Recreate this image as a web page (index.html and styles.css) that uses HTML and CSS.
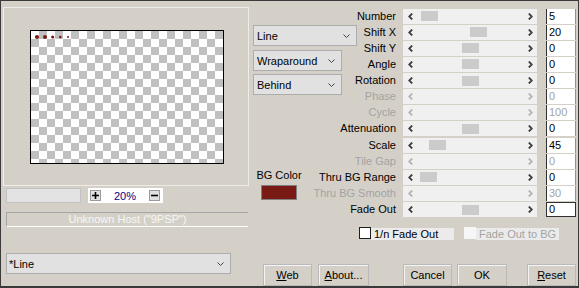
FILE: index.html
```html
<!DOCTYPE html>
<html lang="en">
<head>
  <meta charset="UTF-8">
  <title>Line Filter</title>
  <link rel="stylesheet" href="styles.css">
</head>
<body>
  <div class="window">
    <div class="left">
      <div class="preview">
        <div class="canvas">
          <svg width="192" height="132" viewBox="0 0 192 132">
            <circle cx="6" cy="6" r="2.1" fill="#7a1a15"/>
            <circle cx="14" cy="6" r="2" fill="#7a1a15"/>
            <circle cx="21.7" cy="6" r="1.6" fill="#7a1a15"/>
            <circle cx="29.3" cy="6" r="1.3" fill="#7a1a15"/>
            <circle cx="37" cy="6" r="1" fill="#7a1a15"/>
          </svg>
        </div>
      </div>
      <div class="zoom-row">
        <div class="zoom-track"></div>
        <div class="zoom-box">
          <span class="mini-btn">
            <svg width="7" height="7" viewBox="0 0 7 7"><path d="M0 3.5H7M3.5 0V7" stroke="#000" stroke-width="1.6"/></svg>
          </span>
          <span class="zoom-value">20%</span>
          <span class="mini-btn">
            <svg width="7" height="7" viewBox="0 0 7 7"><path d="M0 3.5H7" stroke="#000" stroke-width="1.6"/></svg>
          </span>
        </div>
      </div>
      <div class="host">Unknown Host ("9PSP")</div>
      <div class="select preset">
        <span>*Line</span>
        <svg class="chev" width="7" height="4" viewBox="0 0 7 4"><polyline points="0.5,0.5 3.5,3.5 6.5,0.5" fill="none" stroke="#444" stroke-width="1"/></svg>
      </div>
    </div>

    <div class="right">
      <div class="top">
        <div class="mid">
          <div class="select line">
            <span>Line</span>
            <svg class="chev" width="7" height="4" viewBox="0 0 7 4"><polyline points="0.5,0.5 3.5,3.5 6.5,0.5" fill="none" stroke="#444" stroke-width="1"/></svg>
          </div>
          <div class="select small wrap">
            <span>Wraparound</span>
            <svg class="chev" width="7" height="4" viewBox="0 0 7 4"><polyline points="0.5,0.5 3.5,3.5 6.5,0.5" fill="none" stroke="#444" stroke-width="1"/></svg>
          </div>
          <div class="select small behind">
            <span>Behind</span>
            <svg class="chev" width="7" height="4" viewBox="0 0 7 4"><polyline points="0.5,0.5 3.5,3.5 6.5,0.5" fill="none" stroke="#444" stroke-width="1"/></svg>
          </div>
          <div class="bg-color">
            <span>BG Color</span>
            <div class="swatch"></div>
          </div>
        </div>

        <div class="params" id="params"></div>
      </div>

      <div class="checks">
        <div class="check">
          <span class="box"></span>
          <span class="check-label">1/n Fade Out</span>
        </div>
        <div class="check disabled">
          <span class="box"></span>
          <span class="check-label">Fade Out to BG</span>
        </div>
      </div>

      <div class="buttons">
        <div class="btn web"><u>W</u>eb</div>
        <div class="btn about"><u>A</u>bout...</div>
        <div class="btn cancel">Cancel</div>
        <div class="btn ok">OK</div>
        <div class="btn reset"><u>R</u>eset</div>
      </div>
    </div>
  </div>

  <script>
    // label, value, thumb offset (null = disabled control)
    const params = [
      ['Number', '5', 8],
      ['Shift X', '20', 57],
      ['Shift Y', '0', 49],
      ['Angle', '0', 49],
      ['Rotation', '0', 49],
      ['Phase', '0', null],
      ['Cycle', '100', null],
      ['Attenuation', '0', 49],
      ['Scale', '45', 16],
      ['Tile Gap', '0', null],
      ['Thru BG Range', '0', 7],
      ['Thru BG Smooth', '30', null],
      ['Fade Out', '0', 49]
    ];

    const left = '<svg width="5" height="7" viewBox="0 0 5 7"><polyline points="4.2,0.5 1.2,3.5 4.2,6.5" fill="none" stroke-width="1.8"/></svg>';
    const right = '<svg width="5" height="7" viewBox="0 0 5 7"><polyline points="0.8,0.5 3.8,3.5 0.8,6.5" fill="none" stroke-width="1.8"/></svg>';

    const grid = document.getElementById('params');
    params.forEach(([label, value, pos], i) => {
      const off = pos === null ? ' off' : '';
      const thumb = pos === null ? '' : `<span class="thumb" style="margin-left: ${pos}px"></span>`;
      grid.innerHTML += `
        <div class="label${off}">${label}</div>
        <div class="slider${off}">${left}<span class="track">${thumb}</span>${right}</div>
        <div class="edit${off} e${i + 1}">${value}</div>
      `;
    });
  </script>
</body>
</html>
```

FILE: styles.css
```css
* {
  box-sizing: border-box;
}

body {
  margin: 0;
  font-family: "Liberation Sans", Arial, sans-serif;
  font-size: 11px;
  color: #000;
  background-color: #d4d0c8;
}

.window {
  width: 579px;
  height: 288px;
  border: 1px solid #3a3a3a;
  border-bottom-width: 2px;
  background-color: #d4d0c8;
  display: flex;
}

/* left side: preview, zoom, host, preset */
.left {
  width: 252px;
  padding: 6px 0 0 2px;
  display: flex;
  flex-direction: column;
}

.preview {
  width: 246px;
  height: 179px;
  border: 1px solid #edece8;
  padding: 22px 0 0 26px;
}

.canvas {
  width: 194px;
  height: 134px;
  border: 1px solid #000;
  background: repeating-conic-gradient(#c0c0c0 0 25%, #fff 0 50%) 0 0 / 16px 16px;
}

.canvas svg {
  display: block;
}

.zoom-row {
  display: flex;
  gap: 7px;
  margin: 2px 0 0 3px;
}

.zoom-track {
  width: 75px;
  height: 15px;
  background-color: #e3e3e3;
  border: 1px solid #c2c2c2;
}

.zoom-box {
  width: 75px;
  height: 15px;
  background-color: #fff;
  display: flex;
  align-items: center;
  justify-content: space-between;
  padding: 0 3px 0 2px;
}

.mini-btn {
  width: 11px;
  height: 11px;
  border: 1px solid #9a9a9a;
  background-color: #e1e1e1;
  display: flex;
  align-items: center;
  justify-content: center;
}

.zoom-value {
  color: #000080;
}

.host {
  width: 242px;
  height: 15px;
  margin: 9px 0 0 3px;
  border-top: 1px solid #a6a6a6;
  border-left: 1px solid #a6a6a6;
  border-bottom: 1px solid #fff;
  color: #f7f7f7;
  text-align: center;
  line-height: 13px;
}

.select {
  height: 21px;
  background-color: #e1e1e1;
  border: 1px solid #adadad;
  display: flex;
  align-items: center;
  justify-content: space-between;
  padding: 0 6px 0 3px;
}

.preset {
  width: 225px;
  margin: 26px 0 0 3px;
  padding-left: 2px;
}

/* right side */
.right {
  width: 323px;
  display: flex;
  flex-direction: column;
}

.top {
  display: grid;
}

.top > * {
  grid-area: 1 / 1;
}

.mid {
  display: flex;
  flex-direction: column;
  align-items: flex-start;
  padding-top: 24px;
}

.select.line {
  width: 104px;
}

.select.small {
  width: 89px;
}

.wrap {
  margin-top: 4px;
}

.behind {
  margin-top: 3px;
}

.bg-color {
  width: 44px;
  margin: 73.5px 0 0 4px;
  display: flex;
  flex-direction: column;
  align-items: center;
  line-height: 13px;
  white-space: nowrap;
}

.swatch {
  width: 36px;
  height: 15px;
  margin-top: 3.5px;
  background-color: #7a1a15;
  border: 1px solid #808080;
}

.params {
  display: grid;
  grid-template-columns: 1fr 143px 30px;
  grid-auto-rows: 15px;
  row-gap: 1.15px;
  padding-top: 7.5px;
}

.label {
  text-align: right;
  padding-right: 7px;
  line-height: 15px;
  white-space: nowrap;
}

.label.off {
  color: #a3a3a3;
}

.slider {
  width: 134px;
  height: 15px;
  background-color: #f0f0f0;
  display: flex;
  align-items: center;
  padding: 0 4px 0 5px;
  stroke: #404040;
}

.slider.off {
  stroke: #b4b4b4;
}

.slider svg {
  display: block;
}

.track {
  flex: 1;
  height: 15px;
  display: flex;
  align-items: center;
}

.thumb {
  width: 17px;
  height: 10px;
  background-color: #cbcbcb;
}

.edit {
  height: 15px;
  background-color: #fff;
  padding-left: 2px;
  line-height: 15px;
  border-left: 1px solid #303030;
  border-right: 1px solid #909090;
}

.edit.off {
  color: #a3a3a3;
}

.e13 {
  border: 1px solid #303030;
  line-height: 13px;
}

/* checkboxes */
.checks {
  display: flex;
  gap: 10px;
  margin-top: 9.7px;
  padding-left: 106px;
}

.check {
  display: flex;
  height: 13px;
}

.check .box {
  width: 12px;
  height: 12px;
  background-color: #fff;
  border: 1px solid #202020;
}

.check-label {
  width: 83px;
  height: 12px;
  margin-top: 1px;
  background-color: #ebebeb;
  padding-left: 3px;
  line-height: 12px;
}

.check.disabled .box {
  background-color: #f6f6f6;
  border-color: #f6f6f6;
}

.check.disabled .check-label {
  color: #a3a3a3;
}

/* dialog buttons */
.buttons {
  display: flex;
  margin-top: 24px;
  padding-left: 10px;
}

.btn {
  height: 22px;
  border: 1px solid #b9b9b9;
  box-shadow: inset 1px 1px 0 #f4f4f4;
  background-color: #d4d0c8;
  text-align: center;
  line-height: 20px;
}

.web {
  width: 49px;
}

.about {
  width: 51px;
  margin-left: 6px;
}

.cancel {
  width: 49px;
  margin-left: 34px;
}

.ok {
  width: 50px;
  margin-left: 5px;
}

.reset {
  width: 49px;
  margin-left: 20px;
}
```
